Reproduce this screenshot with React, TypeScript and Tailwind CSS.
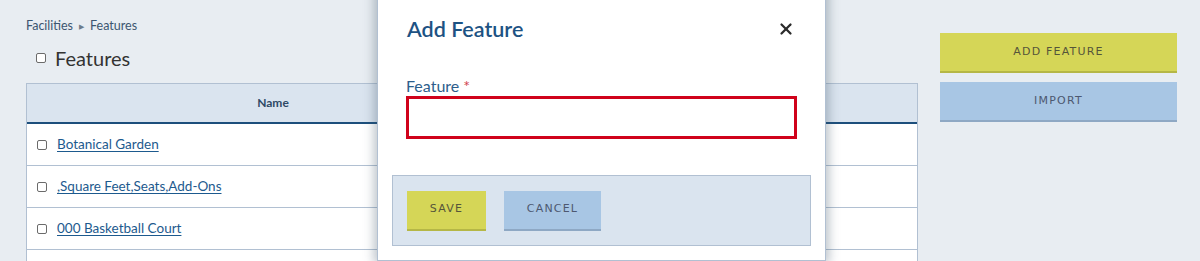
import { X } from 'lucide-react';

const rows = ['Botanical Garden', ',Square Feet,Seats,Add-Ons', '000 Basketball Court', ''];

const btnFont = { fontFamily: '"DejaVu Sans", Verdana, sans-serif' };

function Box() {
  return (
    <span className="inline-block h-[10px] w-[10px] shrink-0 rounded-[2px] border border-[#6b6b6b] bg-white" />
  );
}

export default function App() {
  return (
    <div
      className="relative h-[261px] w-[1200px] overflow-hidden bg-[#e8edf2]"
      style={{ fontFamily: 'Lato, "Open Sans", sans-serif' }}
    >
      <div className="flex gap-[22px] pl-[26px]">
        <div className="w-[892px]">
          <div className="flex h-[33px] items-end gap-[6px] text-[12.5px] leading-[14px] text-[#3c5670]">
            <span>Facilities</span>
            <span className="text-[7px] text-[#6c7c8c]">▶</span>
            <span>Features</span>
          </div>
          <div className="flex h-[50px] items-center gap-[9px] pl-[10px]">
            <Box />
            <span className="text-[20px] text-[#333]">Features</span>
          </div>
          <div className="border border-[#b1c0d2] bg-white">
            <div className="flex h-[40px] items-center border-b-2 border-[#1d4f7c] bg-[#dae4ef]">
              <span className="w-[492px] text-center text-[12px] font-bold text-[#2e4a66]">Name</span>
            </div>
            {rows.map((r, i) => (
              <div key={i} className="flex h-[42px] items-center gap-[10px] border-b border-[#b1c0d2] pl-[10px]">
                {r && <Box />}
                {r && (
                  <a className="text-[13.5px] text-[#1d5a8e] underline underline-offset-2">{r}</a>
                )}
              </div>
            ))}
          </div>
        </div>
        <div className="flex w-[237px] flex-col gap-[9px] pt-[33px]">
          <button
            className="h-[40px] border-b-2 border-[#b5b746] bg-[#d5d657] text-[11px] tracking-[1.2px] text-[#55553a]"
            style={btnFont}
          >
            ADD FEATURE
          </button>
          <button
            className="h-[40px] border-b-2 border-[#8ea8c4] bg-[#a8c6e4] text-[11px] tracking-[1.2px] text-[#4d5870]"
            style={btnFont}
          >
            IMPORT
          </button>
        </div>
      </div>

      <div className="absolute left-[377px] top-[-10px] h-[271px] w-[449px] border border-[#b1c0d2] bg-white shadow-[0_0_10px_3px_rgba(60,80,100,0.35)]">
        <div className="flex h-[60px] items-end justify-between pb-[9px] pl-[29px] pr-[30px]">
          <span className="text-[21.5px] font-semibold leading-[26px] text-[#1d5283]">Add Feature</span>
          <X className="mb-[4px] h-[18px] w-[18px] text-[#2b2b2b]" strokeWidth={3} />
        </div>
        <div className="px-[28px] pt-[26px]">
          <div className="text-[16px] leading-[18px] text-[#2d5e8c]">
            Feature <span className="text-[#d0434f]">*</span>
          </div>
          <div className="mt-[1px] h-[43px] w-[391px] border-[3px] border-[#d0021b]" />
        </div>
        <div className="mx-[14px] mt-[36px] flex h-[71px] items-center gap-[18px] border border-[#b1c0d2] bg-[#dae4ef] pl-[14px]">
          <button
            className="h-[40px] w-[79px] border-b-2 border-[#b5b746] bg-[#d5d657] text-[11px] tracking-[1.2px] text-[#55553a]"
            style={btnFont}
          >
            SAVE
          </button>
          <button
            className="h-[40px] w-[97px] border-b-2 border-[#8ea8c4] bg-[#a8c6e4] text-[11px] tracking-[1.2px] text-[#4d5870]"
            style={btnFont}
          >
            CANCEL
          </button>
        </div>
      </div>
    </div>
  );
}
